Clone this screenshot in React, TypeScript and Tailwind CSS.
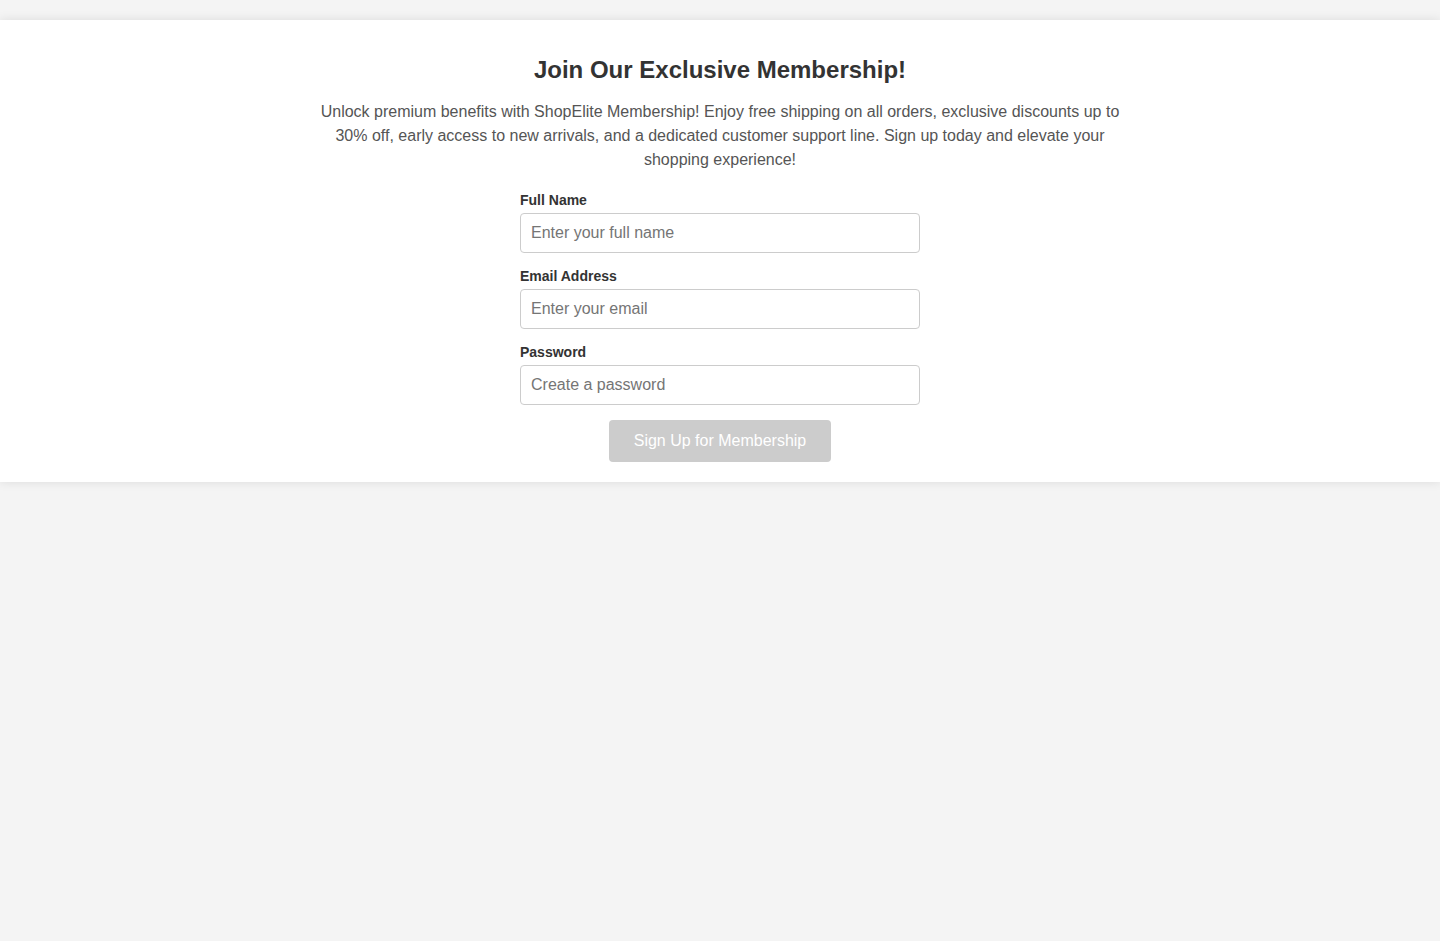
import React from 'react';

const fields = [
    { id: 'name', label: 'Full Name', type: 'text', placeholder: 'Enter your full name' },
    { id: 'email', label: 'Email Address', type: 'email', placeholder: 'Enter your email' },
    { id: 'password', label: 'Password', type: 'password', placeholder: 'Create a password' },
];

const App = () => {
    return (
        <div className="min-h-screen bg-[#f4f4f4] pt-5 font-['Liberation_Sans',Arial,sans-serif]">
            <section className="bg-white shadow-[0_0_10px_rgba(0,0,0,0.1)] px-5 pt-[36px] pb-5 text-center">
                <h2 className="text-[24px] leading-[28px] font-bold text-[#333]">Join Our Exclusive Membership!</h2>
                <p className="mt-[16px] mx-auto max-w-[800px] text-[16px] leading-[24px] text-[#555]">
                    Unlock premium benefits with ShopElite Membership! Enjoy free shipping on all orders, exclusive
                    discounts up to 30% off, early access to new arrivals, and a dedicated customer support line. Sign
                    up today and elevate your shopping experience!
                </p>
                <form className="mx-auto mt-[20px] w-[400px] text-left" onSubmit={(e) => e.preventDefault()}>
                    {fields.map((f) => (
                        <div key={f.id} className="mb-[15px]">
                            <label htmlFor={f.id} className="block text-[14px] leading-[16px] font-bold text-[#333] mb-[5px]">
                                {f.label}
                            </label>
                            <input
                                id={f.id}
                                type={f.type}
                                placeholder={f.placeholder}
                                className="block w-full h-[40px] px-[10px] text-[16px] border border-[#ccc] rounded-[4px] bg-white placeholder:text-[#757575] outline-none"
                            />
                        </div>
                    ))}
                    <div className="flex justify-center">
                        <button
                            type="submit"
                            className="h-[42px] w-[222px] rounded-[4px] bg-[#ccc] text-white text-[16px]"
                        >
                            Sign Up for Membership
                        </button>
                    </div>
                </form>
            </section>
        </div>
    );
};

export default App;
